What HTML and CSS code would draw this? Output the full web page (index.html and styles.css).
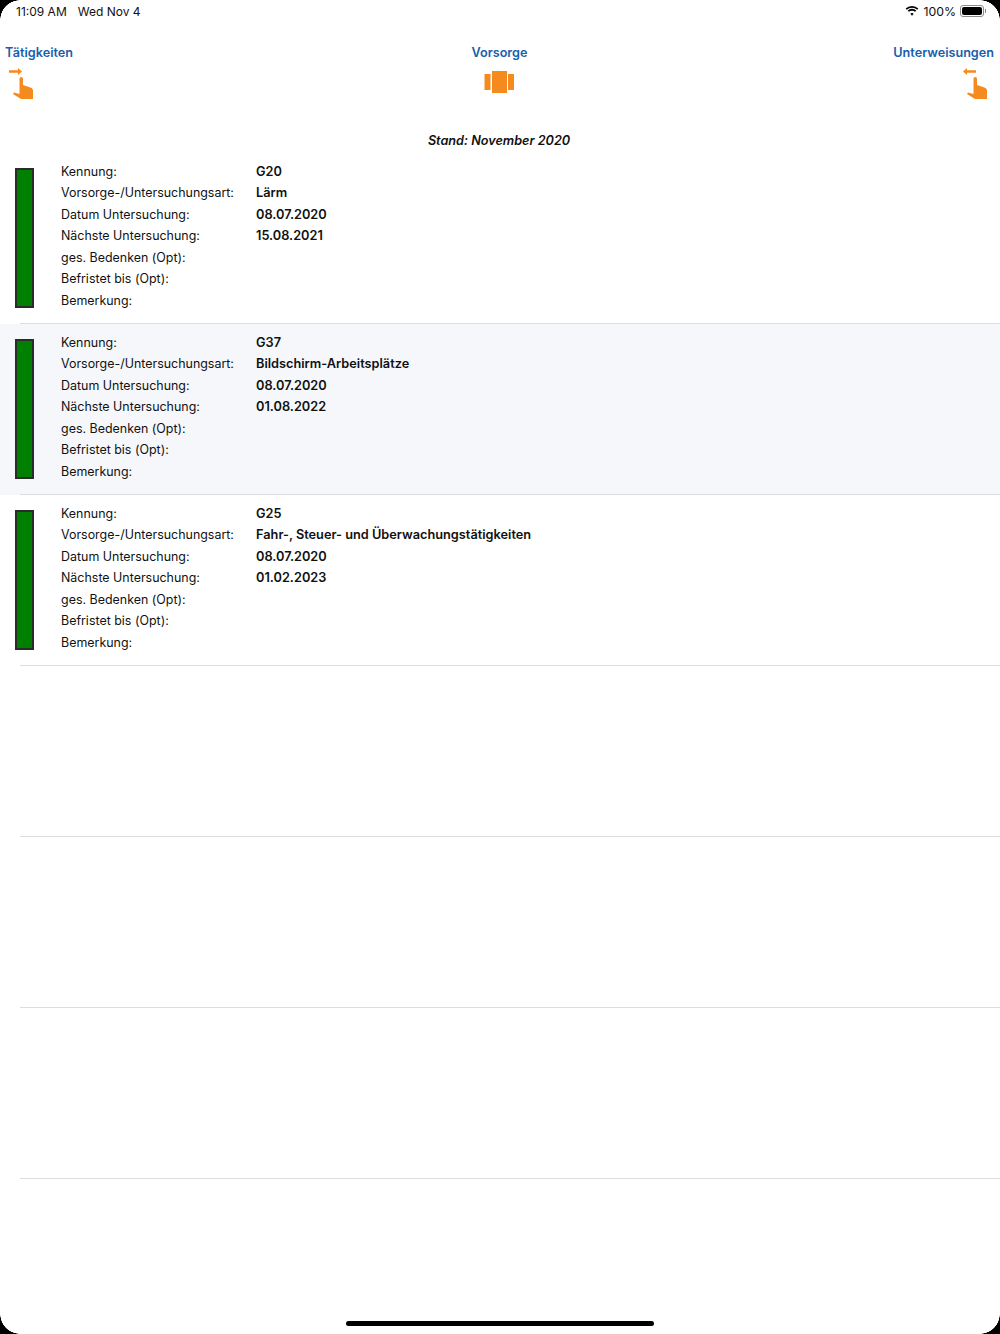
FILE: index.html
```html
<!DOCTYPE html>
<html lang="de">
<head>
  <meta charset="UTF-8">
  <title>Vorsorge</title>
  <meta name="viewport" content="width=device-width, initial-scale=1.0">
  <link rel="stylesheet" href="styles.css">
</head>
<body>
  <div class="screen">

    <div class="statusbar">
      <div class="status-left">
        <span>11:09 AM</span>
        <span>Wed Nov 4</span>
      </div>
      <div class="status-right">
        <svg class="wifi" width="14" height="10" viewBox="0 0 15 11">
          <path d="M7.500 1.900c2.200 0 4.200.9 5.700 2.300l1.300-1.400A10 10 0 0 0 7.500 0 10 10 0 0 0 .5 2.800l1.300 1.400a8.200 8.200 0 0 1 5.700-2.300z" fill="#000"/>
          <path d="M7.500 5.100c1.300 0 2.500.5 3.400 1.300l1.300-1.400a6.800 6.800 0 0 0-9.400 0l1.300 1.400c.9-.8 2.100-1.300 3.400-1.300z" fill="#000"/>
          <path d="M7.500 7.800c-.7 0-1.300.2-1.800.7l1.800 2.200 1.800-2.200c-.5-.5-1.100-.7-1.800-.7z" fill="#000"/>
        </svg>
        <span>100%</span>
        <div class="battery"><div class="battery-fill"></div></div>
        <div class="battery-tip"></div>
      </div>
    </div>

    <div class="navbar">
      <div class="nav-item nav-left">
        <span class="nav-title">Tätigkeiten</span>
        <svg class="swipe" width="26" height="34" viewBox="0 0 26 34">
          <path d="M0 3.300h9V1l4 3.500L9 8V5.700H0z" fill="#f58b1f"/>
          <path d="M10.500 11.700a1.750 1.750 0 0 1 3.500 0V18l7.500 2.500c1.500.5 2.500 1.500 2.500 3V32H12l-8-5 1-1.500 5.500 1.500z" fill="#f58b1f"/>
        </svg>
      </div>
      <div class="nav-item nav-center">
        <span class="nav-title">Vorsorge</span>
        <svg class="carousel" width="30" height="22" viewBox="0 0 30 22">
          <rect x="0.500" y="3" width="6" height="16" fill="#f58b1f"/>
          <rect x="8" y="0" width="15" height="22" fill="#f58b1f"/>
          <rect x="24" y="3" width="6" height="16" fill="#f58b1f"/>
        </svg>
      </div>
      <div class="nav-item nav-right">
        <span class="nav-title">Unterweisungen</span>
        <svg class="swipe" width="26" height="34" viewBox="0 0 26 34">
          <path d="M13 3.300H4V1L0 4.500 4 8V5.700h9z" fill="#f58b1f"/>
          <path d="M10.500 11.700a1.750 1.750 0 0 1 3.500 0V18l7.500 2.500c1.500.5 2.500 1.500 2.500 3V32H12l-8-5 1-1.500 5.500 1.500z" fill="#f58b1f"/>
        </svg>
      </div>
    </div>

    <div class="stand">Stand: November 2020</div>

    <div class="list">
      <div class="row">
        <div class="ampel"></div>
        <div class="details">
          <span class="lbl">Kennung:</span><span class="val">G20</span>
          <span class="lbl">Vorsorge-/Untersuchungsart:</span><span class="val">Lärm</span>
          <span class="lbl">Datum Untersuchung:</span><span class="val">08.07.2020</span>
          <span class="lbl">Nächste Untersuchung:</span><span class="val">15.08.2021</span>
          <span class="lbl">ges. Bedenken (Opt):</span><span class="val"></span>
          <span class="lbl">Befristet bis (Opt):</span><span class="val"></span>
          <span class="lbl">Bemerkung:</span><span class="val"></span>
        </div>
      </div>
      <div class="row alt">
        <div class="ampel"></div>
        <div class="details">
          <span class="lbl">Kennung:</span><span class="val">G37</span>
          <span class="lbl">Vorsorge-/Untersuchungsart:</span><span class="val">Bildschirm-Arbeitsplätze</span>
          <span class="lbl">Datum Untersuchung:</span><span class="val">08.07.2020</span>
          <span class="lbl">Nächste Untersuchung:</span><span class="val">01.08.2022</span>
          <span class="lbl">ges. Bedenken (Opt):</span><span class="val"></span>
          <span class="lbl">Befristet bis (Opt):</span><span class="val"></span>
          <span class="lbl">Bemerkung:</span><span class="val"></span>
        </div>
      </div>
      <div class="row">
        <div class="ampel"></div>
        <div class="details">
          <span class="lbl">Kennung:</span><span class="val">G25</span>
          <span class="lbl">Vorsorge-/Untersuchungsart:</span><span class="val">Fahr-, Steuer- und Überwachungstätigkeiten</span>
          <span class="lbl">Datum Untersuchung:</span><span class="val">08.07.2020</span>
          <span class="lbl">Nächste Untersuchung:</span><span class="val">01.02.2023</span>
          <span class="lbl">ges. Bedenken (Opt):</span><span class="val"></span>
          <span class="lbl">Befristet bis (Opt):</span><span class="val"></span>
          <span class="lbl">Bemerkung:</span><span class="val"></span>
        </div>
      </div>
      <div class="row"></div>
      <div class="row"></div>
      <div class="row"></div>
    </div>

    <div class="home-bar"></div>

    <div class="corner corner-tl"></div>
    <div class="corner corner-tr"></div>
    <div class="corner corner-bl"></div>
    <div class="corner corner-br"></div>
  </div>
</body>
</html>
```

FILE: styles.css
```css
html, body {
  margin: 0;
  padding: 0;
}

body {
  font-family: Inter, "Liberation Sans", Arial, sans-serif;
  background-color: #ffffff;
  color: #000000;
}

.screen {
  position: relative;
  width: 1000px;
  height: 1334px;
  overflow: hidden;
  background-color: #ffffff;
}

/* status bar */
.statusbar {
  height: 22px;
  padding: 0 14px 0 16px;
  display: flex;
  justify-content: space-between;
  align-items: center;
  font-size: 12px;
  color: #111111;
}

.status-left {
  display: flex;
  gap: 11px;
}

.status-right {
  display: flex;
  align-items: center;
  font-size: 12.3px;
}

.wifi {
  margin-right: 4px;
}

.battery {
  width: 24px;
  height: 12px;
  margin-left: 4px;
  padding: 1px;
  border: 1px solid #8a8a8a;
  border-radius: 3px;
  box-sizing: border-box;
}

.battery-fill {
  height: 100%;
  background-color: #000000;
  border-radius: 2px;
}

.battery-tip {
  width: 1px;
  height: 4px;
  margin-left: 1px;
  background-color: #8a8a8a;
}

/* nav */
.navbar {
  height: 89px;
  display: flex;
  justify-content: space-between;
  padding: 0 6px 0 5px;
}

.nav-item {
  display: flex;
  flex-direction: column;
  width: 200px;
}

.nav-left {
  align-items: flex-start;
}

.nav-center {
  align-items: center;
}

.nav-right {
  align-items: flex-end;
}

.nav-title {
  margin-top: 23px;
  font-size: 12.65px;
  font-weight: 600;
  line-height: 16px;
  color: #1a5eab;
}

.swipe {
  margin-top: 6px;
}

.nav-left .swipe {
  margin-left: 4px;
}

.nav-right .swipe {
  margin-right: 5px;
}

.carousel {
  margin-top: 10px;
  margin-left: -2px;
}

.stand {
  height: 42px;
  padding-right: 2px;
  line-height: 59px;
  text-align: center;
  font-size: 12.65px;
  font-weight: 600;
  font-style: italic;
  color: #111111;
}

/* list */
.row {
  position: relative;
  display: flex;
  height: 171px;
  box-sizing: border-box;
}

.row::after {
  content: "";
  position: absolute;
  left: 20px;
  right: 0;
  bottom: 0;
  height: 1px;
  background-color: #dcdde0;
}

.alt {
  background-color: #f5f7fb;
}

.ampel {
  width: 15px;
  height: 136px;
  margin: 15px 0 0 15px;
  background-color: #008000;
  border: 2px solid #2b2b2b;
  flex-shrink: 0;
}

.details {
  display: grid;
  grid-template-columns: 195px 1fr;
  grid-auto-rows: 21.5px;
  margin: 7.6px 0 0 27px;
  font-size: 12.45px;
  line-height: 21.5px;
  flex: 1;
}

.lbl {
  color: #111111;
}

.val {
  font-size: 12.75px;
  font-weight: 600;
  color: #111111;
}

.home-bar {
  position: absolute;
  left: 346px;
  bottom: 8px;
  width: 308px;
  height: 5px;
  border-radius: 3px;
  background-color: #000000;
}

/* black rounded screen corners */
.corner {
  position: absolute;
  width: 20px;
  height: 20px;
  pointer-events: none;
}

.corner-tl {
  top: 0;
  left: 0;
  background: radial-gradient(circle at 100% 100%, transparent 19.500px, #000 20px);
}

.corner-tr {
  top: 0;
  right: 0;
  background: radial-gradient(circle at 0 100%, transparent 19.500px, #000 20px);
}

.corner-bl {
  bottom: 0;
  left: 0;
  background: radial-gradient(circle at 100% 0, transparent 19.500px, #000 20px);
}

.corner-br {
  bottom: 0;
  right: 0;
  background: radial-gradient(circle at 0 0, transparent 19.500px, #000 20px);
}
```
